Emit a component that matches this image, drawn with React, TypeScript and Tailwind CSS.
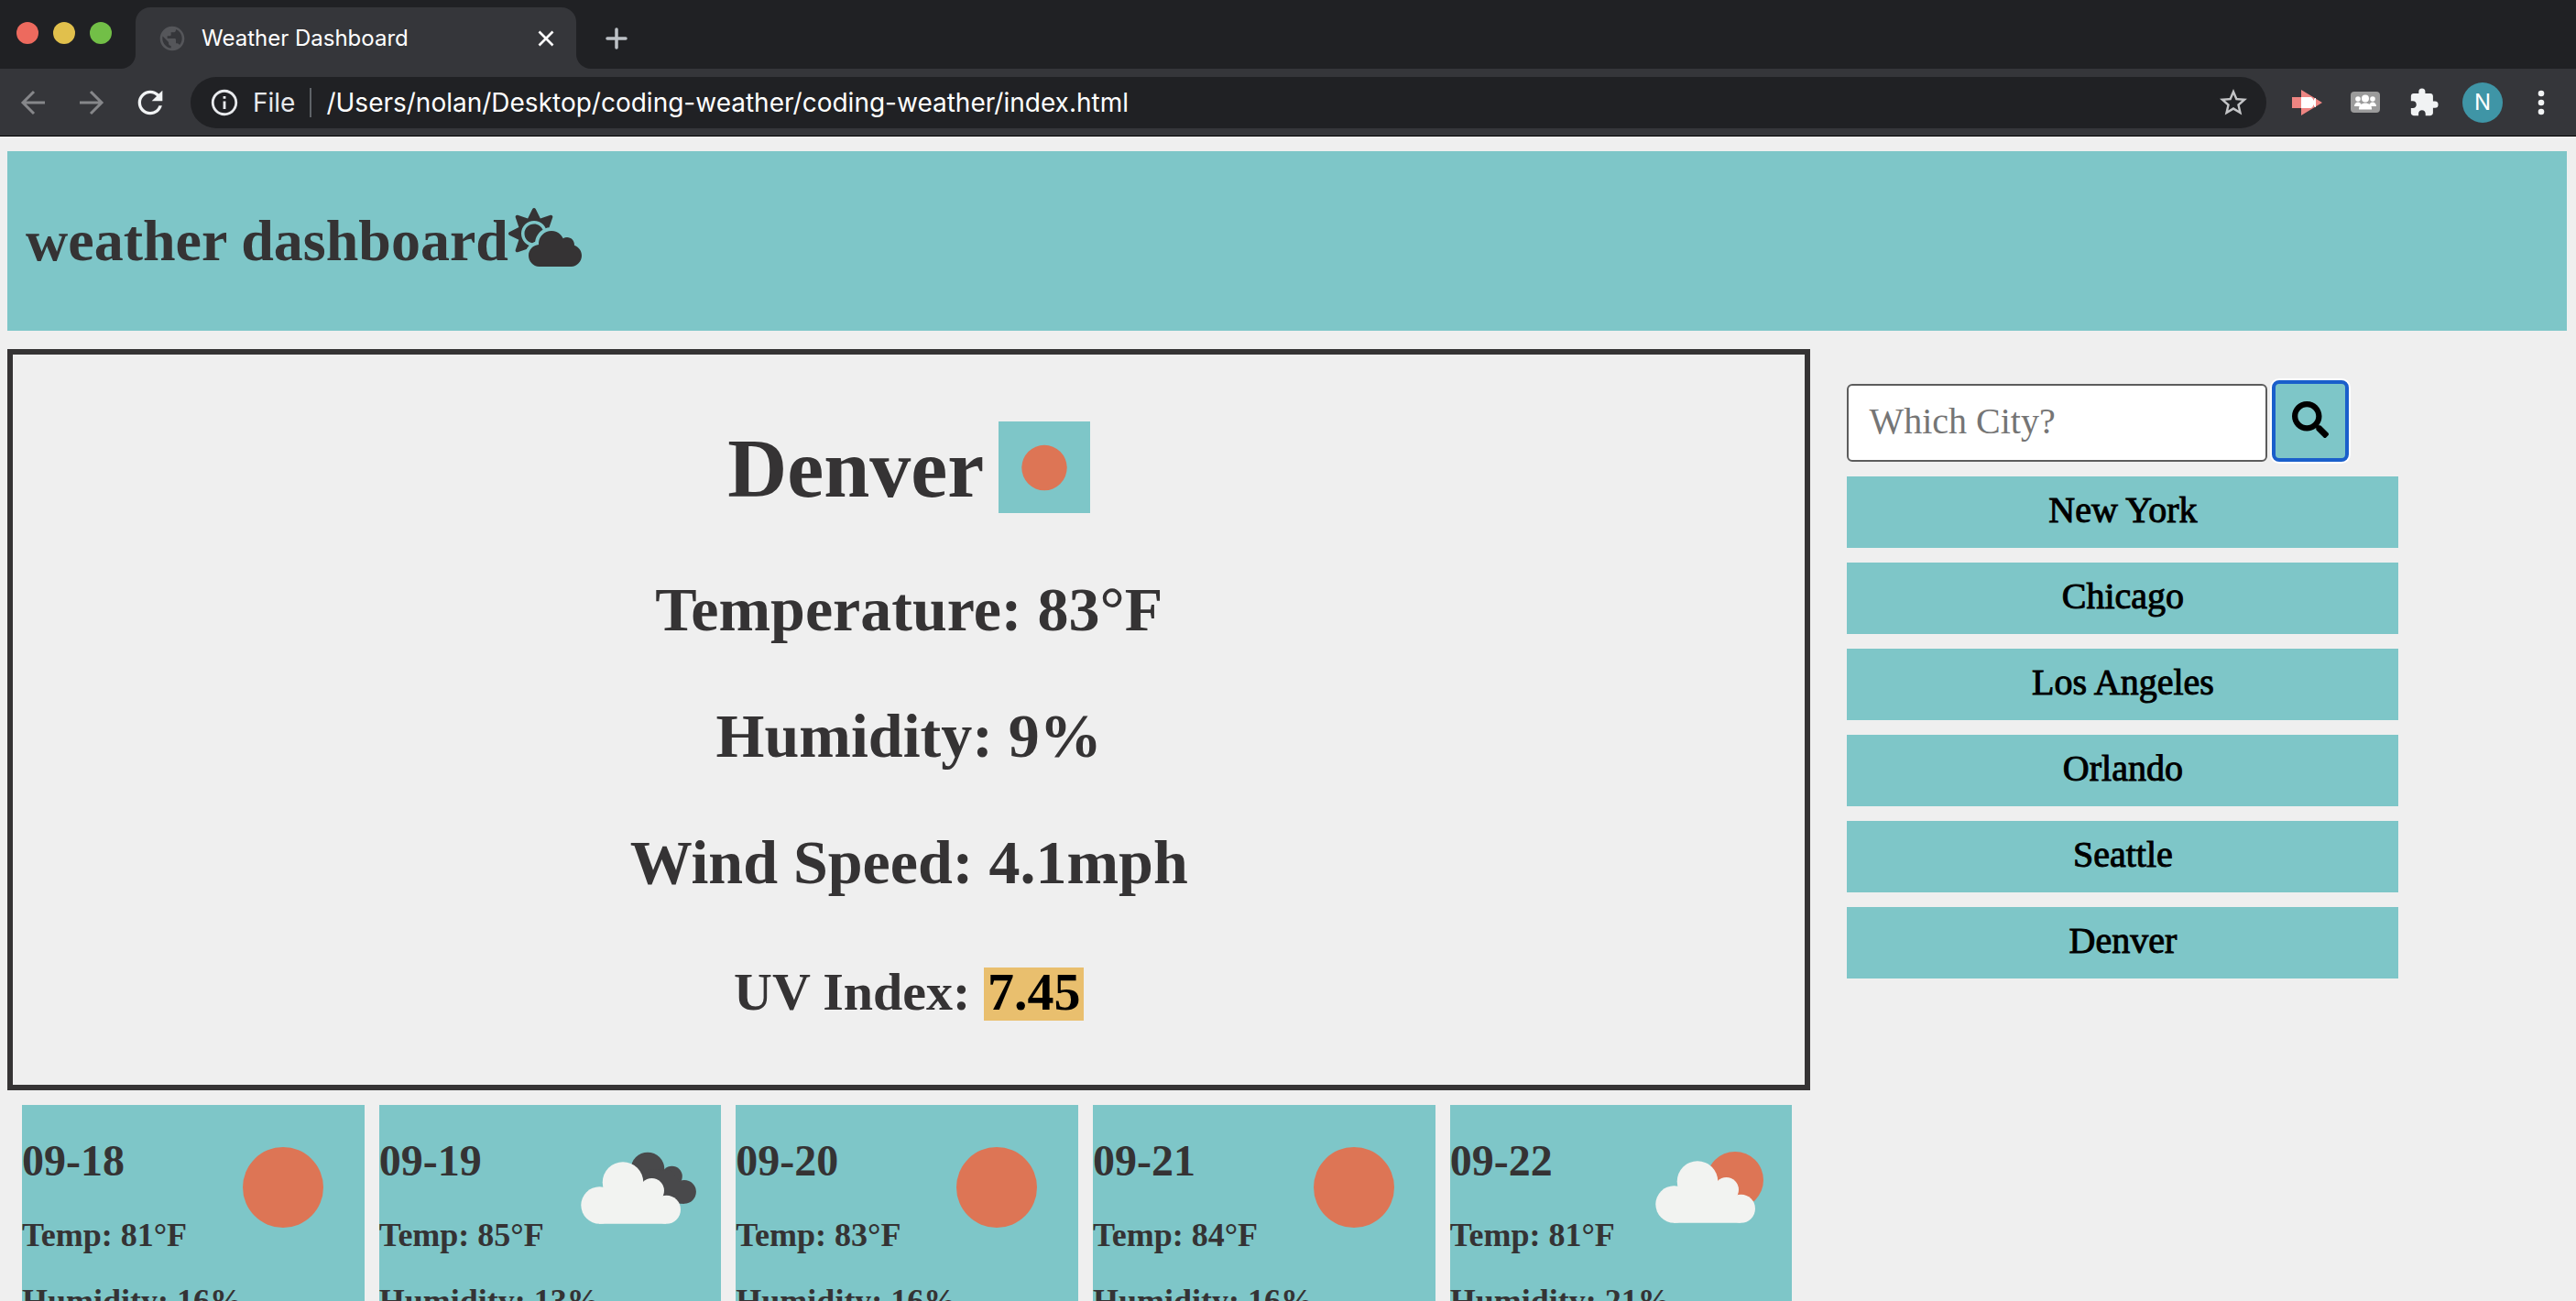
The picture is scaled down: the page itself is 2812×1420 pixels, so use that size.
import React from "react";
import { FaCloudSun, FaSearch } from "react-icons/fa";
import { MdExtension, MdInfoOutline, MdPublic, MdRefresh, MdStarOutline } from "react-icons/md";

type Sky = "clear" | "clouds" | "partly";

const cities = ["New York", "Chicago", "Los Angeles", "Orlando", "Seattle", "Denver"];

const forecast: { date: string; temp: number; humidity: number; sky: Sky }[] = [
  { date: "09-18", temp: 81, humidity: 16, sky: "clear" },
  { date: "09-19", temp: 85, humidity: 13, sky: "clouds" },
  { date: "09-20", temp: 83, humidity: 16, sky: "clear" },
  { date: "09-21", temp: 84, humidity: 16, sky: "clear" },
  { date: "09-22", temp: 81, humidity: 21, sky: "partly" },
];

function WhiteCloud() {
  return (
    <g fill="#f2f3f1">
      <circle cx="49.5" cy="108.5" r="20.2" />
      <circle cx="75" cy="83.5" r="22.3" />
      <circle cx="106.5" cy="92.5" r="13.5" />
      <circle cx="122.5" cy="113.2" r="15.5" />
      <path d="M49 128.7V92H106L122 104V128.7Z" />
    </g>
  );
}

function SkyIcon({ sky, className }: { sky: Sky; className: string }) {
  return (
    <svg viewBox="0 0 178 178" className={className} role="img" aria-label={sky}>
      {sky === "clear" && <circle cx="89" cy="90" r="44" fill="#dd7555" />}
      {sky === "partly" && (
        <>
          <circle cx="116" cy="82" r="31" fill="#dd7555" />
          <WhiteCloud />
        </>
      )}
      {sky === "clouds" && (
        <>
          <g fill="#49494b">
            <circle cx="98" cy="70" r="18.3" />
            <circle cx="124.5" cy="78" r="11.3" />
            <circle cx="138" cy="94.8" r="12.9" />
            <path d="M98 70L124 72L138 90V107.7H110Z" />
          </g>
          <g transform="translate(-4 1)">
            <WhiteCloud />
          </g>
        </>
      )}
    </svg>
  );
}

function BrowserChrome() {
  return (
    <div className="shrink-0 border-b border-black bg-[#35363a] font-[Inter,sans-serif] text-white">
      <div className="flex h-[75px]">
        <div className="flex w-[148px] shrink-0 items-center gap-4 rounded-br-2xl bg-[#202124] pb-1 pl-[18px]">
          <button aria-label="Close window" className="size-6 rounded-full bg-[#ed6a5e]" />
          <button aria-label="Minimize window" className="size-6 rounded-full bg-[#e1c04c]" />
          <button aria-label="Zoom window" className="size-6 rounded-full bg-[#72bf47]" />
        </div>
        <div className="w-[481px] shrink-0 bg-[#202124] pt-2">
          <div className="flex h-full items-center rounded-t-2xl bg-[#35363a] pr-6 pl-6">
            <MdPublic className="size-8 text-[#55565a]" />
            <span className="ml-4 flex-1 text-[24px] leading-8">Weather Dashboard</span>
            <button aria-label="Close tab">
              <svg viewBox="0 0 18 18" className="size-[18px]" stroke="white" strokeWidth="2.6">
                <path d="M1.5 1.5L16.5 16.5M16.5 1.5L1.5 16.5" />
              </svg>
            </button>
          </div>
        </div>
        <div className="flex flex-1 items-center rounded-bl-2xl bg-[#202124] pt-2 pl-8">
          <button aria-label="New tab">
            <svg viewBox="0 0 24 24" className="size-6" stroke="#bdc1c6" strokeWidth="3.5" strokeLinecap="round">
              <path d="M12 2V22M2 12H22" />
            </svg>
          </button>
        </div>
      </div>
      <div className="flex h-[73px] items-center pl-[22px]">
        <button aria-label="Back">
          <svg viewBox="0 0 28 28" className="size-7" fill="none" stroke="#86878a" strokeWidth="3">
            <path d="M27 14H3M15 2L3 14L15 26" />
          </svg>
        </button>
        <button aria-label="Forward" className="ml-9">
          <svg viewBox="0 0 28 28" className="size-7" fill="none" stroke="#86878a" strokeWidth="3">
            <path d="M1 14H25M13 2L25 14L13 26" />
          </svg>
        </button>
        <button aria-label="Reload" className="ml-[30px]">
          <MdRefresh className="size-10 text-[#f1f3f4]" />
        </button>
        <div className="ml-6 flex h-14 min-w-0 flex-1 items-center rounded-full bg-[#202124] pr-[18px] pl-5 text-[28px] leading-9">
          <MdInfoOutline className="size-[34px] shrink-0 text-[#e8eaed]" />
          <span className="ml-[14px] text-[#e8eaed]">File</span>
          <span className="ml-4 h-8 w-0.5 bg-[#5f6368]" />
          <input
            aria-label="Address"
            defaultValue="/Users/nolan/Desktop/coding-weather/coding-weather/index.html"
            className="ml-4 min-w-0 flex-1 bg-transparent outline-none"
          />
          <button aria-label="Bookmark this page">
            <MdStarOutline className="size-9 text-[#c4c5c7]" />
          </button>
        </div>
        <button aria-label="Screen recorder" className="ml-[27px]">
          <svg viewBox="0 0 34 28" className="h-7 w-[34px]">
            <path d="M1 8H11V0L34 14L11 28V20H1Z" fill="#ee8582" />
            <path d="M11 8H22L24 10V12L26 9H27V19H26L24 16V18L22 20H11Z" fill="white" />
          </svg>
        </button>
        <button aria-label="Group view" className="ml-[30px]">
          <svg viewBox="0 0 34 26" className="h-[26px] w-[34px]" fill="white">
            <rect x="1" y="1" width="32" height="23" rx="4" fill="#9b9b9b" />
            <circle cx="9" cy="9" r="2.8" />
            <circle cx="25" cy="9" r="2.8" />
            <path d="M5 17C5 11 13 11 13 17ZM21 17C21 11 29 11 29 17Z" />
            <circle cx="17" cy="8.5" r="5" fill="#9b9b9b" />
            <circle cx="17" cy="8.5" r="4" />
            <path d="M10 20.5C9 11 25 11 24 20.5Z" />
          </svg>
        </button>
        <button aria-label="Extensions" className="ml-[30px]">
          <MdExtension className="size-[34px] text-[#f1f3f4]" />
        </button>
        <button
          aria-label="Profile"
          className="ml-[25px] flex size-11 items-center justify-center rounded-full bg-[#3f95a6] text-[24px]"
        >
          N
        </button>
        <button aria-label="Menu" className="mr-[34px] ml-[38px]">
          <svg viewBox="0 0 8 28" className="h-7 w-2" fill="#f1f3f4">
            <circle cx="4" cy="4" r="3.3" />
            <circle cx="4" cy="14" r="3.3" />
            <circle cx="4" cy="24" r="3.3" />
          </svg>
        </button>
      </div>
    </div>
  );
}

function CurrentWeather() {
  return (
    <section className="border-[6px] border-[#353334] pt-[73px] pb-[61px] text-center text-[68px] leading-[80px]">
      <div className="mb-[65px] flex items-center justify-center gap-4">
        <h2 className="pt-1 text-[90px] leading-[96px]">Denver</h2>
        <SkyIcon sky="clear" className="size-[100px] bg-[#7ec6c8]" />
      </div>
      <p>Temperature: 83°F</p>
      <p className="mt-[58px]">Humidity: 9%</p>
      <p className="mt-[58px]">Wind Speed: 4.1mph</p>
      <p className="mt-[62px] text-[58px]">
        UV Index:{" "}
        <span className="inline-block bg-[#e9bf6e] px-1 pb-1 leading-[54px] text-black">7.45</span>
      </p>
    </section>
  );
}

export default function App() {
  return (
    <div className="flex h-screen flex-col overflow-hidden bg-[#efefef]">
      <BrowserChrome />
      <div className="pt-4 font-['Liberation_Serif',serif] font-bold text-[#353334]">
        <header className="mr-[10px] ml-2 flex h-[196px] items-center bg-[#7ec6c8] pl-5">
          <h1 className="flex items-center text-[64px] leading-[72px]">
            weather dashboard
            <FaCloudSun className="mb-2 h-16 w-20" />
          </h1>
        </header>
        <div className="flex items-start pt-5">
          <main className="ml-2 w-[70%] shrink-0">
            <CurrentWeather />
            <ul className="grid grid-cols-5 gap-4 pt-4 pr-5 pl-4">
              {forecast.map((day) => (
                <li key={day.date} className="flex h-[320px] bg-[#7ec6c8]">
                  <div className="min-w-0 flex-1 pt-8 text-[36px] leading-10 whitespace-nowrap">
                    <h3 className="text-[48px] leading-[58px]">{day.date}</h3>
                    <p className="mt-8">Temp: {day.temp}°F</p>
                    <p className="mt-8">Humidity: {day.humidity}%</p>
                  </div>
                  <SkyIcon sky={day.sky} className="size-[178px] shrink-0" />
                </li>
              ))}
            </ul>
          </main>
          <aside className="ml-10 min-w-0 flex-1 pt-[34px] text-[40px] font-normal">
            <form className="flex items-end gap-[5px]" onSubmit={(e) => e.preventDefault()}>
              <input
                aria-label="City"
                placeholder="Which City?"
                className="h-[85px] w-[459px] min-w-0 rounded-md border-2 border-[#5c5c5c] bg-white px-[22px] pb-1 placeholder:text-[#757575] focus:outline-none"
              />
              <button
                aria-label="Search"
                className="flex h-[89px] w-[84px] shrink-0 items-center justify-center rounded-lg border-4 border-[#1a5fcb] bg-[#7ec6c8] pb-1 text-black ring-2 ring-white"
              >
                <FaSearch className="size-10" />
              </button>
            </form>
            <ul className="mt-4 flex w-full max-w-[602px] flex-col gap-4">
              {cities.map((city) => (
                <li key={city}>
                  <button className="block h-[78px] w-full bg-[#7ec6c8] pb-1 text-center text-black [-webkit-text-stroke:1px]">
                    {city}
                  </button>
                </li>
              ))}
            </ul>
          </aside>
        </div>
      </div>
    </div>
  );
}
